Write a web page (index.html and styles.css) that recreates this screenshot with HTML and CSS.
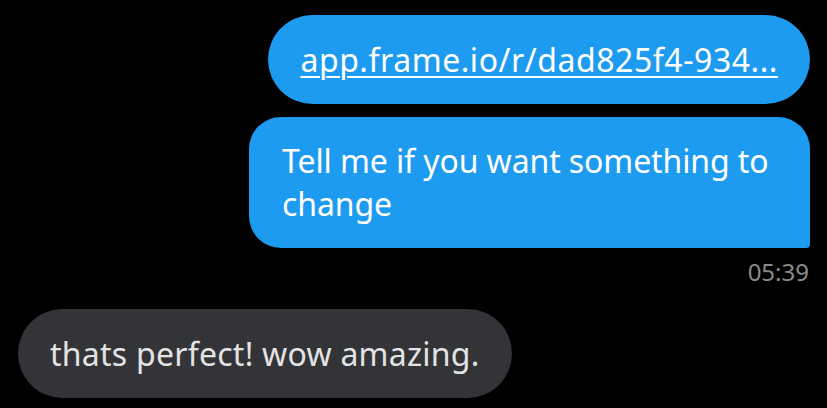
FILE: index.html
```html
<!DOCTYPE html>
<html>
<head>
<meta charset="utf-8">
<link rel="stylesheet" href="styles.css">
</head>
<body>
<div class="chat">
  <div class="row out">
    <div class="bubble blue pill"><a class="link" href="#">app.frame.io/r/dad825f4-934...</a></div>
  </div>
  <div class="row out">
    <div class="bubble blue last">Tell me if you want something to change</div>
  </div>
  <div class="time">05:39</div>
  <div class="row in">
    <div class="bubble grey pill">thats perfect! wow amazing.</div>
  </div>
</div>
</body>
</html>
```
FILE: styles.css
```css
html, body {
  margin: 0;
  padding: 0;
  background: #000;
}
body {
  font-family: "Noto Sans", "Open Sans", sans-serif;
  width: 827px;
  height: 408px;
  overflow: hidden;
}
.chat {
  display: flex;
  flex-direction: column;
  padding: 15px 17px 0 18px;
}
.row {
  display: flex;
}
.row.out {
  justify-content: flex-end;
  margin-bottom: 13px;
}
.row.in {
  justify-content: flex-start;
}
.bubble {
  font-size: 32px;
  line-height: 43px;
  padding: 23px 32px;
  box-sizing: border-box;
}
.blue {
  background: #1d9bf0;
  color: #fff;
}
.grey {
  background: #333438;
  color: #e3e3e3;
  letter-spacing: 0.25px;
}
.pill {
  border-radius: 45px;
}
.last {
  max-width: 561px;
  border-radius: 32px 32px 4px 32px;
  padding: 22px 32px 23px 33px;
  letter-spacing: -0.1px;
}
.link {
  color: #fff;
  letter-spacing: 0.55px;
  text-decoration: underline;
  text-underline-offset: 4px;
  text-decoration-thickness: 2px;
}
.time {
  align-self: flex-end;
  margin-top: -3px;
  margin-right: 1px;
  font-size: 24px;
  line-height: 28px;
  color: #8a8a8d;
  margin-bottom: 23px;
}
```
